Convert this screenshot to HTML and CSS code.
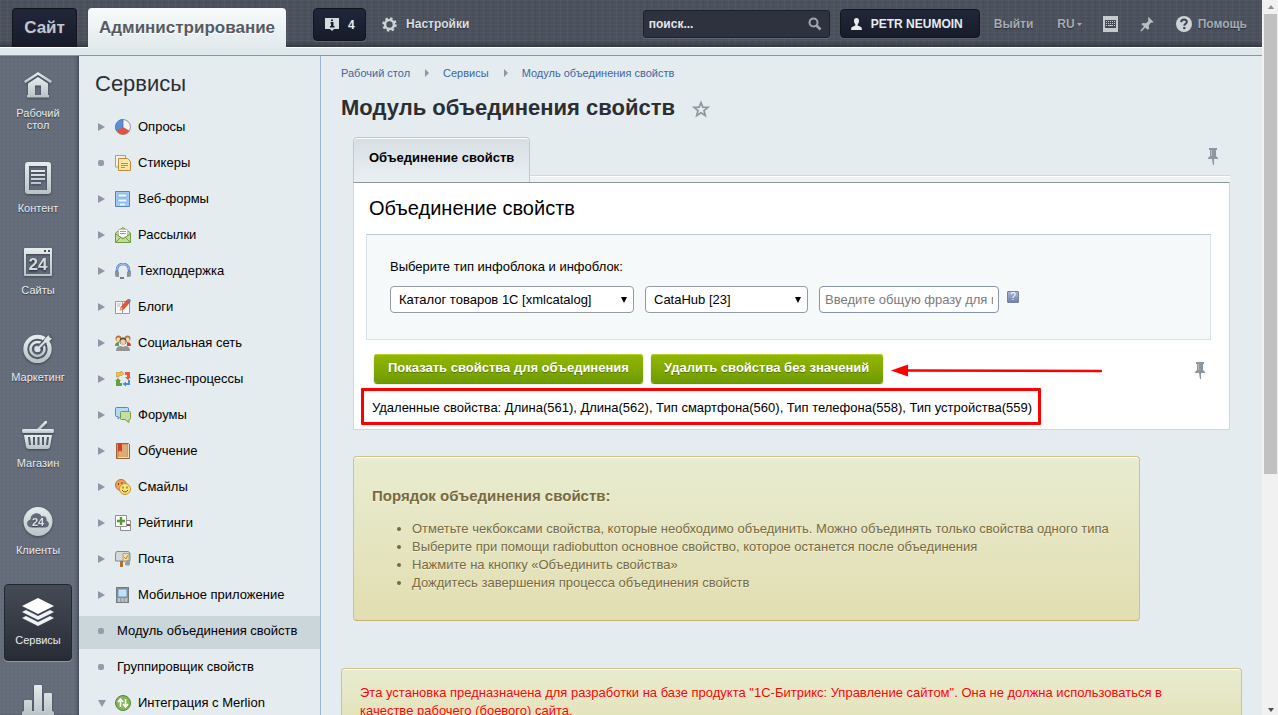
FILE: index.html
```html
<!DOCTYPE html>
<html lang="ru">
<head>
<meta charset="utf-8">
<title>Модуль объединения свойств</title>
<link rel="stylesheet" href="styles.css">
</head>
<body>
<svg class="defs" width="0" height="0" aria-hidden="true">
  <defs>
    <linearGradient id="metal" x1="0" y1="0" x2="0" y2="1"><stop offset="0" stop-color="#e6ecee"/><stop offset="1" stop-color="#b9c3c6"/></linearGradient>
    <symbol id="pushpin" viewBox="0 0 10 17"><path d="M1 0h8v2H8v6l2 2v1H0v-1l2-2V2H1z" fill="#8e969e"/><path d="M3 2h1v6H3z" fill="#b5bcc2"/><path d="M4 11h2v6H5z" fill="#8e969e"/></symbol>
  </defs>
</svg>
<div class="window">
  <div class="app">
    <header class="topbar">
      <a class="tab-site" href="#">Сайт</a>
      <a class="tab-admin" href="#">Администрирование</a>
      <button class="counter" type="button">
        <svg width="15" height="15" viewBox="0 0 15 15"><path d="M0 1h14v11H9l-2 2-2-2H0z" fill="#d5dcdf"/><path d="M5.500 5h3v4h1v1.500H5V9h1V6.500h-.5zM6 2.500h2V4H6z" fill="#1b2030"/></svg>
        4
      </button>
      <a class="settings" href="#">
        <svg width="15" height="15" viewBox="0 0 15 15"><circle cx="7.500" cy="7.500" r="6" fill="none" stroke="#cdd3d6" stroke-width="2.500" stroke-dasharray="2.350 2.350"/><circle cx="7.500" cy="7.500" r="4.500" fill="none" stroke="#cdd3d6" stroke-width="2.600"/></svg>
        Настройки
      </a>
      <div class="search">
        <input type="text" value="поиск..." aria-label="Поиск">
        <svg width="14" height="14" viewBox="0 0 14 14"><circle cx="5.500" cy="5.500" r="4" fill="none" stroke="#a0a5ad" stroke-width="2"/><path d="M8.500 8.500l4 4" stroke="#a0a5ad" stroke-width="2.600"/></svg>
      </div>
      <button class="user" type="button">
        <svg width="11" height="12" viewBox="0 0 11 12"><path d="M5.500 0C7.500 0 8.200 1.500 8 3.500 7.800 5 7 5.500 6.700 6.500v1L10 9c.7.500.9 1.500.9 3H.1c0-1.500.2-2.500.9-3l3.300-1.500v-1C4 5.500 3.200 5 3 3.500 2.800 1.500 3.500 0 5.500 0z" fill="#e8ecee"/></svg>
        PETR NEUMOIN
      </button>
      <a class="top-link logout" href="#">Выйти</a>
      <a class="top-link lang" href="#">RU<svg width="5" height="3" viewBox="0 0 5 3"><path d="M0 0h5L2.500 3z" fill="#a6acb2"/></svg></a>
      <button class="top-icon keyboard" type="button" aria-label="Клавиатура">
        <svg width="15" height="16" viewBox="0 0 15 16"><path d="M0 0h15v16H0z" fill="#c4cacd"/><path d="M2 4h11v8H2z" fill="#444b55"/><path d="M3 5.500h9M3 7.500h9" stroke="#c4cacd" stroke-dasharray="1 1"/><path d="M3 9.500h1M5 9.500h5M11 9.500h1" stroke="#c4cacd"/></svg>
      </button>
      <button class="top-icon pin" type="button" aria-label="Закрепить">
        <svg width="14" height="15" viewBox="0 0 14 15"><path d="M8.500 0L13.500 5l-1.200.8-1.300-.3-2.300 3 .4 3-1.400 1.200L1.500 7.200l1.200-1.300 3.200.3L8.400 4l-.3-2.600z" fill="#b9bfc3"/><path d="M5 9.500L1 14" stroke="#b9bfc3" stroke-width="1.600"/></svg>
      </button>
      <a class="top-link help" href="#">
        <svg width="16" height="16" viewBox="0 0 16 16"><circle cx="8" cy="8" r="8" fill="#cdd3d6"/><path d="M5.200 6.200C5.200 2.600 11 2.700 10.800 6c-.1 1.600-2.500 1.900-2.500 3.700" fill="none" stroke="#3e4550" stroke-width="2"/><path d="M7.200 11h2.200v2.100H7.200z" fill="#3e4550"/></svg>
        Помощь
      </a>
    </header>
    <div class="strip"></div>

    <div class="body">
      <nav class="rail" aria-label="Разделы">
        <a class="rail-item home" href="#">
          <svg width="30" height="28" viewBox="0 0 30 28" fill="url(#metal)"><path d="M15 1l14 9-1.200 2.200L15 4 2.200 12.200 1 10z"/><path d="M15 6l10 6.500V24h1v2.500H4V24h1V12.500zM12 14.500V24h6v-9.500z" fill-rule="evenodd"/></svg>
          <span>Рабочий<br>стол</span>
        </a>
        <a class="rail-item content" href="#">
          <svg width="26" height="32" viewBox="0 0 26 32" fill="url(#metal)"><path d="M3 0h20q3 0 3 3v26q0 3-3 3H3q-3 0-3-3V3q0-3 3-3zM4 4v24h18V4z" fill-rule="evenodd"/><path d="M6 8h14v2H6zM6 12h14v2H6zM6 16h14v2H6zM6 20h10v2H6z"/></svg>
          <span>Контент</span>
        </a>
        <a class="rail-item" href="#">
          <svg width="28" height="28" viewBox="0 0 28 28"><path d="M1 0h26q1 0 1 1v26q0 1-1 1H1q-1 0-1-1V1q0-1 1-1zM2 6v20h24V6zM20 2v2h2V2zM24 2v2h2V2z" fill="url(#metal)" fill-rule="evenodd"/><text class="badge-large" x="14" y="22" text-anchor="middle">24</text></svg>
          <span>Сайты</span>
        </a>
        <a class="rail-item" href="#">
          <svg width="30" height="29" viewBox="0 0 30 29"><circle cx="14.500" cy="15" r="12.200" fill="none" stroke="url(#metal)" stroke-width="4"/><circle cx="14.500" cy="15" r="7" fill="none" stroke="url(#metal)" stroke-width="2.600"/><circle cx="14.500" cy="15" r="3.200" fill="#dce3e5"/><path d="M16 13.500L28 1.500" stroke="#596070" stroke-width="5"/><path d="M14.500 15L25 4.500" stroke="#dce3e5" stroke-width="2"/><path d="M21 6l4.500-5 1 2.500 2.500 1-4.500 4.500-3-.5z" fill="#dce3e5"/></svg>
          <span>Маркетинг</span>
        </a>
        <a class="rail-item" href="#">
          <svg width="32" height="28" viewBox="0 0 32 28" fill="url(#metal)"><path d="M15 8L23 0h2v2l-6 6z"/><path d="M1 8h30q1 0 1 2t-1 2H1q-1 0-1-2t1-2z"/><path d="M2 14h28l-2 12q-.5 2-3 2H7q-2.500 0-3-2zM6 16l1 8h2l-1-8zM11 16v8h2v-8zM15.500 16v8h2v-8zM20 16v8h2v-8zM25 16l-1 8h2l1-8z" fill-rule="evenodd"/></svg>
          <span>Магазин</span>
        </a>
        <a class="rail-item" href="#">
          <svg width="30" height="29" viewBox="0 0 30 29"><circle cx="15" cy="14.500" r="14.500" fill="url(#metal)"/><path d="M9 20.500c-6 0-6.500-7-1.500-8 0-7 9-8.500 11-3 4-1 5.500 1.500 5 4 4 2 2.500 7-1 7z" fill="#626978"/><text class="badge-small" x="15" y="18.500" text-anchor="middle">24</text></svg>
          <span>Клиенты</span>
        </a>
        <a class="rail-item active" href="#" aria-current="page">
          <svg width="32" height="28" viewBox="0 0 32 28" fill="#eef2f4"><path d="M16 0l16 8-16 8L0 8z" fill="#fff"/><path d="M0 14l4-2 12 6 12-6 4 2-16 8z"/><path d="M0 20l4-2 12 6 12-6 4 2-16 8z"/></svg>
          <span>Сервисы</span>
        </a>
        <a class="rail-item" href="#" aria-label="Аналитика">
          <svg width="32" height="30" viewBox="0 0 32 30" fill="url(#metal)"><path d="M2 26V16q0-1 1-1h6q1 0 1 1v10h2V1q0-1 1-1h6q1 0 1 1v25h2V9q0-1 1-1h6q1 0 1 1v17q2 0 2 2v2H0v-2q0-2 2-2z"/></svg>
        </a>
      </nav>

      <aside class="menu">
        <h2 class="menu-title">Сервисы</h2>
        <ul class="menu-list">
          <li><a class="menu-item" href="#"><i class="arrow"></i><svg class="mi" viewBox="0 0 16 16"><circle cx="8" cy="8" r="7.500" fill="#f4f5f6" stroke="#8f979d"/><path d="M8 8V.5A7.500 7.500 0 0 0 1.500 11.700z" fill="#5d8fd8" stroke="#4272b8" stroke-width=".7"/><path d="M8 8l6.500 3.700a7.500 7.500 0 0 1-13 0z" fill="#dd5540"/></svg>Опросы</a></li>
          <li><a class="menu-item" href="#"><i class="dot"></i><svg class="mi" viewBox="0 0 16 16"><path d="M.5.500h10V12H.5z" fill="#eff0f0" stroke="#a5a19b"/><path d="M3.500 3.500h9l3 3v9h-12z" fill="#fce7a2" stroke="#bf8c3e"/><path d="M6 8.500h7M6 10.500h7M6 12.500h4" stroke="#bd8b42"/></svg>Стикеры</a></li>
          <li><a class="menu-item" href="#"><i class="arrow"></i><svg class="mi" viewBox="0 0 16 16"><path d="M.5.500h14v15H.5z" fill="#a3caf0" stroke="#4c86c4"/><path d="M3 3h9v3H3zM3 8h9v3H3z" fill="#eff7ff" stroke="#6ea3d8" stroke-width=".7"/><path d="M5 12.500h5v2H5z" fill="#eef2f4"/></svg>Веб-формы</a></li>
          <li><a class="menu-item" href="#"><i class="arrow"></i><svg class="mi" viewBox="0 0 16 16"><path d="M.5 6L8 .5 15.500 6v9.500H.5z" fill="#c4dc9a" stroke="#719b43"/><path d="M3.500 2.500h9V9L8 11 3.500 9z" fill="#fff" stroke="#bdc5a9"/><path d="M5 4.500h6M5 6.500h6" stroke="#d28484"/><path d="M1 7l7 5 7-5M1 15l5-5M15 15l-5-5" fill="none" stroke="#719b43"/></svg>Рассылки</a></li>
          <li><a class="menu-item" href="#"><i class="arrow"></i><svg class="mi" viewBox="0 0 16 16"><path d="M2 11V7c0-8 12-8 12 0v4" fill="none" stroke="#5c7ec5" stroke-width="2.500"/><path d="M2 7c0-8 12-8 12 0" fill="none" stroke="#bed0f0"/><path d="M0 8h2l2 1v5H2q-2 0-2-2zM16 8h-2l-2 1v5h2q2 0 2-2z" fill="#8d9198"/><path d="M5 15h4" stroke="#777d84" stroke-width="2"/></svg>Техподдержка</a></li>
          <li><a class="menu-item" href="#"><i class="arrow"></i><svg class="mi" viewBox="0 0 16 16"><path d="M.5 2.500h7v12h-7zM7.500 2.500h7v12h-7z" fill="#fafafa" stroke="#9b9b9b"/><path d="M2 5h4M2 7h3" stroke="#bbb"/><path d="M5 11l1-3 6-7 3 2-6 7z" fill="#e45734" stroke="#bb4430" stroke-width=".6"/><path d="M12 1l1-1h2l1 2-1 1z" fill="#5e87bb"/><path d="M5 11l1-3 2 2z" fill="#f5c56b"/></svg>Блоги</a></li>
          <li><a class="menu-item" href="#"><i class="arrow"></i><svg class="mi" viewBox="0 0 16 16"><circle cx="3.500" cy="3.500" r="3" fill="#b57943"/><circle cx="12.500" cy="3.500" r="3" fill="#b57943"/><path d="M0 11q0-4 4-4v4z" fill="#5b9c4f"/><path d="M16 11q0-4-4-4v4z" fill="#ca4537"/><circle cx="3.500" cy="4.500" r="2" fill="#f7d8b6"/><circle cx="12.500" cy="4.500" r="2" fill="#f7d8b6"/><circle cx="8" cy="6" r="3.500" fill="#57463e"/><circle cx="8" cy="7" r="2.700" fill="#f3ca9d"/><path d="M1 16q0-5 5-5l2 1 2-1q5 0 5 5z" fill="#949494"/></svg>Социальная сеть</a></li>
          <li><a class="menu-item" href="#"><i class="arrow"></i><svg class="mi" viewBox="0 0 16 16"><path d="M1.500 6V1.500H6V0l3 2.500L6 5V4H4v2z" fill="#f5c64e" stroke="#c8902d" stroke-width=".7"/><path d="M10 1h5v5h1l-3 3-3-3h2V4h-2z" fill="#e85938"/><path d="M3 7l3 3H5v2h2v3H1v-5H0z" fill="#66a13b"/><path d="M15 9v5h-4v1.500L7.500 13l3.500-2.500V12h2V9z" fill="#4a8ed4"/></svg>Бизнес-процессы</a></li>
          <li><a class="menu-item" href="#"><i class="arrow"></i><svg class="mi" viewBox="0 0 16 16"><path d="M1.500.500h11q1 0 1 1v7q0 1-1 1H6L3 12V9.500H1.500q-1 0-1-1v-7q0-1 1-1z" fill="#b5d9f2" stroke="#4b8ec7"/><path d="M6.500 4.500h8q1 0 1 1v6q0 1-1 1H14V15.500L10 12.500H6.500q-1 0-1-1v-6q0-1 1-1z" fill="#c6de9f" stroke="#759d45"/></svg>Форумы</a></li>
          <li><a class="menu-item" href="#"><i class="arrow"></i><svg class="mi" viewBox="0 0 16 16"><path d="M1.500.500h12l1 1v14h-13z" fill="#cf9a5c" stroke="#9a6230"/><path d="M4 2h8v12H4z" fill="#dbad74"/><path d="M3 1h4v8L5 7.500 3 9z" fill="#cf3e2e"/><path d="M13.500 1v14M3 14.500h11" stroke="#f3dcb3"/></svg>Обучение</a></li>
          <li><a class="menu-item" href="#"><i class="arrow"></i><svg class="mi" viewBox="0 0 16 16"><circle cx="6" cy="6" r="5.500" fill="#eba35d" stroke="#b97334"/><path d="M3.500 4v2M7 3v2" stroke="#743f19"/><circle cx="10" cy="10" r="5.500" fill="#fce27a" stroke="#c69429"/><path d="M8 7.500v2M12 7.500v2" stroke="#734b14"/><path d="M7 11q3 4 6 0" fill="none" stroke="#734b14"/></svg>Смайлы</a></li>
          <li><a class="menu-item" href="#"><i class="arrow"></i><svg class="mi" viewBox="0 0 16 16"><path d="M5.500 5.500h10v10h-10z" fill="#fff" stroke="#8e8e8e"/><path d="M12 9h3v2h-3z" fill="#cb3a2d"/><path d="M.5.500h11v11H.5z" fill="#fff" stroke="#8e8e8e"/><path d="M6 2v8M2 6h8" stroke="#5b9836" stroke-width="2.400"/></svg>Рейтинги</a></li>
          <li><a class="menu-item" href="#"><i class="arrow"></i><svg class="mi" viewBox="0 0 16 16"><path d="M2 .5h11q2 0 2 3V10H.5V4Q.5 .5 2 .5z" fill="#d5d9dc" stroke="#858a8e"/><path d="M8 2.500h6V10H8z" fill="#f4dfad" stroke="#a18757" stroke-width=".7"/><path d="M9 6l2 2 2-4" fill="none" stroke="#cf7a28"/><path d="M5 10h3v6H5z" fill="#ad7330"/><path d="M10 12l2-3h3v4q0 3-5 1z" fill="#999ea3"/></svg>Почта</a></li>
          <li><a class="menu-item" href="#"><i class="arrow"></i><svg class="mi" viewBox="0 0 16 16"><path d="M1 0h13v16H1z" fill="#737a80"/><path d="M2 1h11v14H2z" fill="#989ea3"/><path d="M3 2h9v8H3z" fill="#bde1ff" stroke="#5a6167" stroke-width=".6"/><path d="M3 12h9M3 14h9" stroke="#e1e5e8" stroke-dasharray="2 1.500"/></svg>Мобильное приложение</a></li>
          <li><a class="menu-item selected" href="#" aria-current="page"><i class="dot"></i>Модуль объединения свойств</a></li>
          <li><a class="menu-item" href="#"><i class="dot"></i>Группировщик свойств</a></li>
          <li><a class="menu-item" href="#"><i class="arrow open"></i><svg class="mi" viewBox="0 0 16 16"><circle cx="8" cy="8" r="7.500" fill="#82b655" stroke="#568536"/><path d="M5.500 12V5M3 7l2.500-3L8 7M10.500 4v7M8 9l2.500 3L13 9" fill="none" stroke="#fff" stroke-width="1.600"/></svg>Интеграция с Merlion</a></li>
        </ul>
      </aside>

      <main class="main">
        <nav class="crumbs" aria-label="Путь">
          <a href="#">Рабочий стол</a><i class="crumb-arrow"></i><a href="#">Сервисы</a><i class="crumb-arrow"></i><a href="#">Модуль объединения свойств</a>
        </nav>
        <div class="title-row">
          <h1>Модуль объединения свойств</h1>
          <button class="plain" type="button" aria-label="В избранное"><svg width="18" height="18" viewBox="0 0 18 18"><path d="M9 2.500l1.800 4.600 5.200.2-4 3.200 1.300 5L9 12.700l-4.300 2.800 1.300-5-4-3.200 5.200-.2z" fill="none" stroke="#8e96a2" stroke-width="1.700"/></svg></button>
        </div>

        <section class="panel-wrap">
          <div class="tabs">
            <button class="tab" type="button">Объединение свойств</button>
            <div class="tabs-rest"><button class="plain" type="button" aria-label="Закрепить вкладки"><svg width="10" height="17"><use href="#pushpin"/></svg></button></div>
          </div>
          <div class="panel">
            <h2 class="panel-title">Объединение свойств</h2>
            <form class="fields">
              <label for="iblock-type">Выберите тип инфоблока и инфоблок:</label>
              <div class="controls">
                <span class="select wide"><select id="iblock-type"><option>Каталог товаров 1C [xmlcatalog]</option></select></span>
                <span class="select narrow"><select aria-label="Инфоблок"><option>CataHub [23]</option></select></span>
                <input class="phrase" type="text" placeholder="Введите общую фразу для поиска" aria-label="Общая фраза">
                <button class="hint" type="button">?</button>
              </div>
            </form>
            <div class="actions">
              <button class="green" type="button">Показать свойства для объединения</button>
              <button class="green" type="button">Удалить свойства без значений</button>
              <svg class="pointer" width="211" height="13" viewBox="0 0 211 13"><path d="M16 6.500L210 7" stroke="#f00" stroke-width="2.500" stroke-linecap="round"/><path d="M0 6.500L17 .5v12z" fill="#f00"/></svg>
              <button class="plain action-pin" type="button" aria-label="Закрепить кнопки"><svg width="10" height="17"><use href="#pushpin"/></svg></button>
            </div>
            <p class="result">Удаленные свойства: Длина(561), Длина(562), Тип смартфона(560), Тип телефона(558), Тип устройства(559)</p>
          </div>
        </section>

        <section class="note guide">
          <h3>Порядок объединения свойств:</h3>
          <ul>
            <li>Отметьте чекбоксами свойства, которые необходимо объединить. Можно объединять только свойства одного типа</li>
            <li>Выберите при помощи radiobutton основное свойство, которое останется после объединения</li>
            <li>Нажмите на кнопку «Объединить свойства»</li>
            <li>Дождитесь завершения процесса объединения свойств</li>
          </ul>
        </section>

        <section class="note license">
          <p>Эта установка предназначена для разработки на базе продукта "1С-Битрикс: Управление сайтом". Она не должна использоваться в качестве рабочего (боевого) сайта.</p>
        </section>
      </main>
    </div>
  </div>
  <div class="scrollbar" aria-hidden="true"><i class="sb-up"></i><i class="sb-thumb"></i><i class="sb-down"></i></div>
</div>
</body>
</html>
```
FILE: styles.css
```css
* { box-sizing: border-box; }
body { margin: 0; font: 13px/18px "Liberation Sans", Arial, sans-serif; color: #000; }
h1, h2, h3, p, ul { margin: 0; padding: 0; }
a { color: inherit; text-decoration: none; }
button, input, select { font: inherit; }
button { cursor: pointer; }
svg { display: block; flex: none; }
.defs { position: absolute; }

.window { display: flex; height: 100vh; overflow: hidden; }
.app { flex: 1; min-width: 0; display: flex; flex-direction: column; background: #e4ecef; }

/* Top bar */
.topbar {
  display: flex; align-items: flex-start; height: 47px; padding: 8px 15px 0 12px; flex: none;
  font-size: 12px; font-weight: bold; color: #d9dee1; white-space: nowrap;
  text-shadow: 0 1px 1px #2a2f38;
  background:
    linear-gradient(rgba(30,34,42,0) 41px, rgba(30,34,42,.5)),
    repeating-linear-gradient(90deg, rgba(255,255,255,.03) 0 1px, transparent 1px 3px, rgba(0,0,0,.04) 3px 4px, transparent 4px 7px),
    repeating-linear-gradient(rgba(255,255,255,.03) 0 1px, transparent 1px 4px),
    #4a515c;
}
.tab-site {
  width: 65px; height: 39px; border: 1px solid #11141c; border-bottom: 0; border-radius: 4px 4px 0 0;
  background: linear-gradient(#20273a, #181c29); color: #c2c6cc; font-size: 17px; line-height: 37px; text-align: center;
}
.tab-admin {
  margin-left: 11px; padding: 0 11px; height: 40px; border-radius: 4px 4px 0 0;
  background: linear-gradient(#f8fafa, #e1eaec); color: #565b61; font-size: 17px; line-height: 39px; text-shadow: 0 1px 0 #fff;
  position: relative; z-index: 1;
}
.counter, .user {
  display: flex; align-items: center; border: 1px solid #12151d; border-radius: 4px;
  background: linear-gradient(#20273a, #181c29); color: #e8ecee; font-weight: bold; box-shadow: 0 1px 0 #5d6470;
}
.counter { margin-left: 27px; width: 53px; height: 33px; padding: 0 0 0 11px; gap: 8px; }
.settings { display: flex; align-items: center; gap: 9px; height: 32px; margin-left: 16px; }
.search {
  display: flex; align-items: center; width: 187px; height: 28px; margin: 2px 0 0 auto; padding-right: 7px;
  border: 1px solid #1d212a; border-radius: 3px; background: #2e323e; box-shadow: 0 1px 0 #626974;
}
.search input { flex: 1; min-width: 0; border: 0; background: none; color: #e2e6e8; padding: 0 5px; outline: 0; }
.user { margin: 1px 0 0 10px; width: 140px; height: 29px; padding: 0 0 0 10px; gap: 9px; }
.top-link { color: #a6acb2; line-height: 32px; }
.logout { margin-left: 14px; }
.lang { display: flex; align-items: center; gap: 2px; margin-left: 24px; }
.top-icon { border: 0; padding: 0; background: none; height: 32px; }
.keyboard { margin-left: 21px; }
.pin { margin-left: 22px; }
.help { display: flex; align-items: center; gap: 6px; margin-left: 22px; }
.strip { flex: none; height: 9px; border-top: 1px solid #fff; border-bottom: 1px solid #8c9499; background: #dee8ea; }

.body { flex: 1; min-height: 0; display: flex; }

/* Icon rail */
.rail {
  flex: none; width: 79px; padding: 1px 7px 0 4px; display: flex; flex-direction: column; gap: 10px; overflow: hidden;
  background: radial-gradient(circle, rgba(80,87,102,.7) 0, transparent 1px) 0 0 / 4px 4px, #666d7b;
  box-shadow: inset -3px 0 3px -1px #484e5c;
}
.rail-item {
  display: flex; flex-direction: column; align-items: center; padding: 14px 0; flex: none;
  color: #e8edf0; font-size: 11px; line-height: 12px; text-align: center; text-shadow: 0 1px 1px #343945;
}
.rail-item svg { margin-bottom: 8px; filter: drop-shadow(0 1px 1px #3d4350); }
.home { padding-bottom: 7px; }
.content { padding-bottom: 10px; }
.rail-item.active {
  margin-top: 4px; padding-top: 13px; border-radius: 4px; border: 1px solid #23272f;
  background: linear-gradient(#454b56, #282c35); box-shadow: 0 1px 0 #9299a5;
}
.badge-large { font: bold 17px "Liberation Sans", sans-serif; fill: #d6dddf; }
.badge-small { font: bold 11px "Liberation Sans", sans-serif; fill: #dce3e5; }

/* Section menu */
.menu { flex: none; width: 242px; border-right: 1px solid #9db4cd; overflow: hidden; background: #e4ecef; }
.menu-title { padding: 14px 16px 0; font-size: 22px; line-height: 28px; font-weight: normal; color: #2b2f33; margin-bottom: 14px; }
.menu-list { list-style: none; }
.menu-item { display: flex; align-items: center; height: 33px; padding: 0 0 3px 19px; margin-bottom: 3px; white-space: nowrap; }
.selected { background: #cbd6db; }
.mi { width: 16px; height: 16px; margin-right: 7px; }
.arrow { flex: none; border-left: 7px solid #8d97a5; border-top: 4px solid transparent; border-bottom: 4px solid transparent; margin-right: 10px; }
.arrow.open { border-top: 7px solid #8d97a5; border-left: 4px solid transparent; border-right: 4px solid transparent; border-bottom: 0; margin-right: 9px; }
.dot { flex: none; width: 6px; height: 6px; border-radius: 2px; background: #949daa; margin-right: 13px; }
.dot + svg { margin-left: -2px; }

/* Content */
.main { flex: 1; min-width: 0; padding: 8px 20px 0; overflow: hidden; }
.crumbs { display: flex; align-items: center; font-size: 11px; color: #3f66a0; }
.crumb-arrow { border-left: 4px solid #8f989f; border-top: 4px solid transparent; border-bottom: 4px solid transparent; margin: 0 14px 0 15px; }
.title-row { display: flex; align-items: center; gap: 17px; height: 52px; }
.title-row h1 { font-size: 22px; line-height: 28px; color: #2b2f33; }
.title-row .plain { margin-top: 2px; }
.plain { padding: 0; border: 0; background: none; }

.panel-wrap { margin: 3px 12px 0; }
.tabs { display: flex; height: 45px; background: #edf2f3; }
.tab {
  height: 45px; padding: 0 15px 5px; border: 1px solid #bfc9cd; border-bottom: 0; border-radius: 4px 4px 0 0;
  font-weight: bold; background: linear-gradient(#d7dfe3, #eaf0f2); box-shadow: inset 0 1px 0 #fff;
}
.tabs-rest { flex: 1; display: flex; justify-content: flex-end; height: 40px; padding: 11px 12px 0 0; border-bottom: 1px solid #fff; background: #e4ecef; align-items: flex-start; box-shadow: inset 0 -1px 0 #ced9dd; }
.panel { border: 1px solid #ced9dd; border-top: 1px solid #8b959a; background: #fff; padding: 0 0 4px 7px; }
.panel-title { padding: 11px 8px 12px; font-size: 20px; line-height: 28px; font-weight: normal; }
.fields { margin: 0 18px 0 5px; padding: 23px; height: 106px; border: 1px solid; border-color: #bccad3 #d7e3e9 #d7e3e9; background: #f5f9f9; }
.fields label { display: block; }
.controls { display: flex; align-items: flex-start; gap: 11px; margin-top: 10px; }
.select { display: grid; align-items: center; }
.select select, .select::after { grid-area: 1 / 1; }
.select::after { content: ""; justify-self: end; margin-right: 7px; border: 3px solid transparent; border-top: 6px solid #000; border-bottom: 0; pointer-events: none; }
.select select, .phrase { width: 100%; height: 27px; border: 1px solid #949ba3; border-radius: 4px; background: #fff; color: #000; }
.select select { appearance: none; padding: 0 8px; }
.wide { width: 244px; }
.narrow { width: 163px; }
.phrase { width: 180px; padding: 0 5px; border-color: #8793a8; }
.phrase::placeholder { color: #7b7b7b; }
.hint { width: 12px; height: 12px; margin: 5px 0 0 -3px; padding: 0; border: 1px solid #7480a4; border-radius: 1px; background: linear-gradient(#a9b3d2, #7782ae); color: #fff; font-size: 10px; line-height: 10px; }
.actions { display: flex; align-items: center; margin: 14px 24px 5px 13px; gap: 8px; }
.green {
  height: 29px; padding: 0 14px 2px; border: 0; border-radius: 3px; color: #fff; font-weight: bold; white-space: nowrap;
  background: linear-gradient(#93b800, #6f9b00); box-shadow: inset 0 1px 0 #b4d32f, 0 1px 1px #5e7f12; text-shadow: 0 1px 0 #56750b;
}
.green + .green { padding: 0 14px 2px 13px; }
.pointer { margin-top: 4px; }
.action-pin { margin: 4px 0 0 auto; }
.result { width: fit-content; padding: 8px 6px 5px 8px; border: 3px solid #f00; border-radius: 1px; }

.note { border: 1px solid #cfc28e; border-bottom-color: #c2b074; border-radius: 4px; box-shadow: inset 0 1px 0 #fff; color: #776a3f; text-shadow: 0 1px 0 #f5f3dc; }
.guide { width: fit-content; margin: 26px 12px 0; padding: 30px 30px 28px 18px; background: linear-gradient(#e8ecd0, #e2deb2); }
.guide h3 { font-size: 15px; line-height: 18px; margin-bottom: 15px; }
.guide ul { padding-left: 40px; }
.license { margin-top: 47px; padding: 15px 64px 15px 18px; background: linear-gradient(#e8ecd0, #e2e0b4); color: #f00; }

/* Window scrollbar */
.scrollbar { flex: none; width: 16px; padding: 5px 1px 3px 2px; background: #f1f1f1; display: flex; flex-direction: column; }
.sb-up { align-self: center; border: 3px solid transparent; border-bottom: 4px solid #8c8c8c; border-top: 0; margin-bottom: 5px; }
.sb-thumb { height: 65%; background: #c1c1c1; }
.sb-down { align-self: center; margin-top: auto; border: 3px solid transparent; border-top: 4px solid #505050; border-bottom: 0; }
```
